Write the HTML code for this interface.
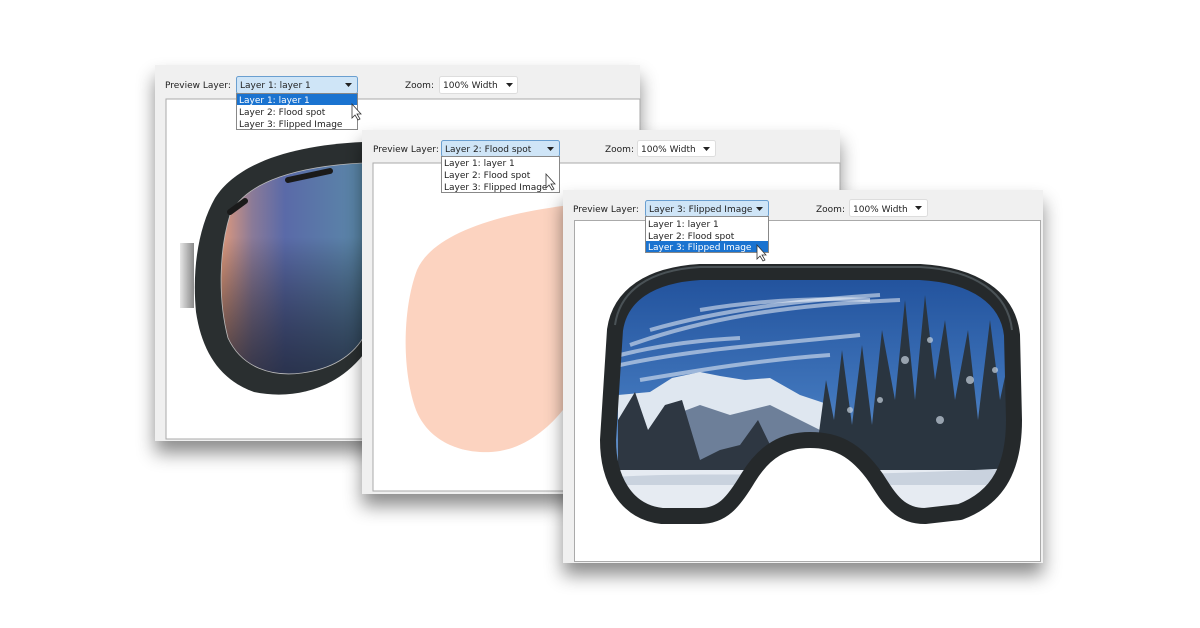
<!DOCTYPE html>
<html><head><meta charset="utf-8"><style>
html,body{margin:0;padding:0;background:#fff;width:1200px;height:628px;overflow:hidden}
svg text{font-family:"DejaVu Sans","Liberation Sans",sans-serif;font-size:9px;fill:#222}
</style></head><body>
<svg width="1200" height="628" viewBox="0 0 1200 628">
<defs>
<filter id="sh" x="-10%" y="-10%" width="130%" height="130%"><feDropShadow dx="0" dy="12" stdDeviation="9" flood-color="#000" flood-opacity="0.45"/></filter>
<linearGradient id="lens1" x1="0" x2="1" y1="0" y2="0">
<stop offset="0" stop-color="#e09a7c"/><stop offset="0.22" stop-color="#8a7a98"/><stop offset="0.45" stop-color="#5a6aa8"/><stop offset="1" stop-color="#5a88a8"/></linearGradient>
<linearGradient id="lens1v" x1="0" x2="0" y1="0" y2="1"><stop offset="0.35" stop-color="#000" stop-opacity="0"/><stop offset="1" stop-color="#1a2030" stop-opacity="0.75"/></linearGradient>
<linearGradient id="strap" x1="0" x2="1"><stop offset="0" stop-color="#e6e6e6"/><stop offset="1" stop-color="#8a8a8a"/></linearGradient>
<linearGradient id="sky" x1="0" x2="0" y1="0" y2="1"><stop offset="0" stop-color="#1f4f9a"/><stop offset="0.5" stop-color="#3f74ba"/><stop offset="1" stop-color="#8fb2d8"/></linearGradient>
<clipPath id="c1"><rect x="166" y="99" width="197" height="340"/></clipPath>
<clipPath id="c2"><rect x="373" y="163" width="192" height="328"/></clipPath>
<clipPath id="lensclip"><path d="M615,330 C620,295 650,275 700,272 L920,272 C975,275 1008,298 1012,335 L1014,420 C1014,465 1000,497 960,512 L925,516 C900,516 890,500 876,478 C855,448 835,440 810,440 C785,440 765,450 748,478 C733,503 722,516 700,516 L662,516 C625,512 608,478 608,440 Z"/></clipPath>
</defs>

<!-- Panel 1 -->
<g filter="url(#sh)"><rect x="155" y="65" width="485" height="376" fill="#f0f0f0"/></g>
<rect x="166" y="99" width="474" height="340" fill="#fff" stroke="#aaa" stroke-width="1"/>
<g clip-path="url(#c1)">
<rect x="180" y="243" width="14" height="65" fill="url(#strap)"/>
<path d="M363,142 C295,145 238,162 215,198 C198,228 192,270 196,312 C202,352 220,380 254,392 C292,400 335,390 363,355 Z" fill="#2a2f30"/>
<path d="M363,163 C302,166 246,180 230,215 C219,250 218,300 228,338 C242,368 272,377 302,373 C332,369 352,356 363,338 Z" fill="url(#lens1)"/>
<path d="M363,163 C302,166 246,180 230,215 C219,250 218,300 228,338 C242,368 272,377 302,373 C332,369 352,356 363,338 Z" fill="url(#lens1v)" stroke="#bbb" stroke-width="0.8"/>
<path d="M288,180 L330,171" stroke="#1a1a1a" stroke-width="6" stroke-linecap="round"/>
<path d="M230,212 L245,201" stroke="#1a1a1a" stroke-width="6" stroke-linecap="round"/>
</g>
<text x="165" y="88">Preview Layer:</text>
<rect x="236.5" y="76.5" width="121" height="17" rx="2" fill="#cfe5f7" stroke="#6a9fd0"/>
<text x="240" y="88">Layer 1: layer 1</text>
<path d="M345,83 L352,83 L348.5,87 Z" fill="#222"/>
<rect x="236.5" y="93.5" width="121" height="36" fill="#fff" stroke="#888"/>
<rect x="237" y="94" width="120" height="11" fill="#1a73d0"/>
<text x="239" y="103" style="fill:#fff">Layer 1: layer 1</text>
<text x="239" y="115">Layer 2: Flood spot</text>
<text x="239" y="127">Layer 3: Flipped Image</text>
<text x="405" y="88">Zoom:</text>
<rect x="439.5" y="76.5" width="78" height="17" rx="2" fill="#fff" stroke="#ddd"/>
<text x="443" y="88">100% Width</text>
<path d="M506,83 L513,83 L509.5,87 Z" fill="#222"/>
<path d="M352,104 L352,118 L355,115 L358,120 L360,119 L357,114 L361,114 Z" fill="#fff" stroke="#333" stroke-width="0.8"/>

<!-- Panel 2 -->
<g filter="url(#sh)"><rect x="362" y="130" width="478" height="364" fill="#f0f0f0"/></g>
<rect x="373" y="163" width="467" height="328" fill="#fff" stroke="#aaa"/>
<g clip-path="url(#c2)">
<path d="M570,205 C490,215 432,236 417,270 C402,310 402,372 416,410 C430,445 468,456 500,451 C530,446 556,422 570,400 Z" fill="#fcd3c0"/>
</g>
<text x="373" y="152">Preview Layer:</text>
<rect x="441.5" y="140.5" width="118" height="16" rx="2" fill="#cfe5f7" stroke="#6a9fd0"/>
<text x="445" y="152">Layer 2: Flood spot</text>
<path d="M547,147 L554,147 L550.5,151 Z" fill="#222"/>
<rect x="441.5" y="156.5" width="118" height="36" fill="#fff" stroke="#888"/>
<text x="444" y="166">Layer 1: layer 1</text>
<text x="444" y="178">Layer 2: Flood spot</text>
<text x="444" y="190">Layer 3: Flipped Image</text>
<text x="605" y="152">Zoom:</text>
<rect x="637.5" y="140.5" width="78" height="16" rx="2" fill="#fff" stroke="#ddd"/>
<text x="641" y="152">100% Width</text>
<path d="M703,147 L710,147 L706.5,151 Z" fill="#222"/>
<path d="M546,174 L546,188 L549,185 L552,190 L554,189 L551,184 L555,184 Z" fill="#fff" stroke="#333" stroke-width="0.8"/>

<!-- Panel 3 -->
<g filter="url(#sh)"><rect x="563" y="190" width="480" height="373" fill="#f0f0f0"/></g>
<rect x="574.5" y="220.5" width="466" height="341" fill="#fff" stroke="#aaa"/>
<g clip-path="url(#lensclip)">
<rect x="600" y="265" width="420" height="260" fill="url(#sky)"/>
<g stroke="#fff" stroke-opacity="0.5" stroke-width="4" fill="none">
<path d="M630,345 C700,320 780,305 900,300"/>
<path d="M650,330 C720,310 800,300 880,295"/>
<path d="M620,365 C690,350 760,345 860,335"/>
<path d="M700,310 C760,300 820,298 870,300"/>
<path d="M640,380 C700,370 760,360 830,355"/>
<path d="M620,355 C660,345 700,340 740,338"/>
</g>
<path d="M618,395 L650,392 L672,378 L700,372 L720,376 L745,380 L770,378 L800,395 L830,405 L830,470 L618,470 Z" fill="#dfe7f0"/>
<path d="M660,420 L700,405 L730,415 L770,405 L820,430 L820,480 L660,480 Z" fill="#6d7f99"/>
<path d="M818,440 L826,380 L834,420 L842,350 L852,425 L862,345 L872,425 L882,330 L895,400 L905,300 L915,400 L925,295 L935,380 L945,320 L955,400 L968,330 L978,420 L990,320 L1000,400 L1015,330 L1015,480 L818,480 Z" fill="#2a3540"/>
<g fill="#c8d3df" opacity="0.7"><circle cx="905" cy="360" r="4"/><circle cx="930" cy="340" r="3"/><circle cx="970" cy="380" r="4"/><circle cx="880" cy="400" r="3"/><circle cx="850" cy="410" r="3"/><circle cx="995" cy="370" r="3"/><circle cx="940" cy="420" r="4"/></g>
<path d="M618,420 L635,392 L648,430 L665,405 L682,400 L700,460 L720,450 L740,445 L758,420 L775,455 L800,440 L820,470 L618,470 Z" fill="#2e3742"/>
<rect x="600" y="470" width="420" height="60" fill="#e6ebf2"/>
<path d="M600,478 C700,470 800,480 1015,468 L1015,485 L600,485 Z" fill="#c9d2de"/>
</g>
<path d="M615,330 C620,295 650,275 700,272 L920,272 C975,275 1008,298 1012,335 L1014,420 C1014,465 1000,497 960,512 L925,516 C900,516 890,500 876,478 C855,448 835,440 810,440 C785,440 765,450 748,478 C733,503 722,516 700,516 L662,516 C625,512 608,478 608,440 Z" fill="none" stroke="#25292b" stroke-width="16" stroke-linejoin="round"/>
<path d="M615,330 C620,295 650,275 700,272 L920,272 C975,275 1008,298 1012,335" fill="none" stroke="#4a5256" stroke-width="2" transform="translate(0,-5)"/>
<text x="573" y="212">Preview Layer:</text>
<rect x="645.5" y="200.5" width="123" height="16" rx="2" fill="#cfe5f7" stroke="#6a9fd0"/>
<text x="649" y="212">Layer 3: Flipped Image</text>
<path d="M756,207 L763,207 L759.5,211 Z" fill="#222"/>
<rect x="645.5" y="216.5" width="123" height="36" fill="#fff" stroke="#888"/>
<text x="648" y="227">Layer 1: layer 1</text>
<text x="648" y="239">Layer 2: Flood spot</text>
<rect x="646" y="241" width="122" height="11" fill="#1a73d0"/>
<text x="648" y="250" style="fill:#fff">Layer 3: Flipped Image</text>
<text x="816" y="212">Zoom:</text>
<rect x="849.5" y="199.5" width="78" height="17" rx="2" fill="#fff" stroke="#ddd"/>
<text x="853" y="212">100% Width</text>
<path d="M915,206 L922,206 L918.5,210 Z" fill="#222"/>
<path d="M757,245 L757,259 L760,256 L763,261 L765,260 L762,255 L766,255 Z" fill="#fff" stroke="#333" stroke-width="0.8"/>
</svg>
</body></html>
